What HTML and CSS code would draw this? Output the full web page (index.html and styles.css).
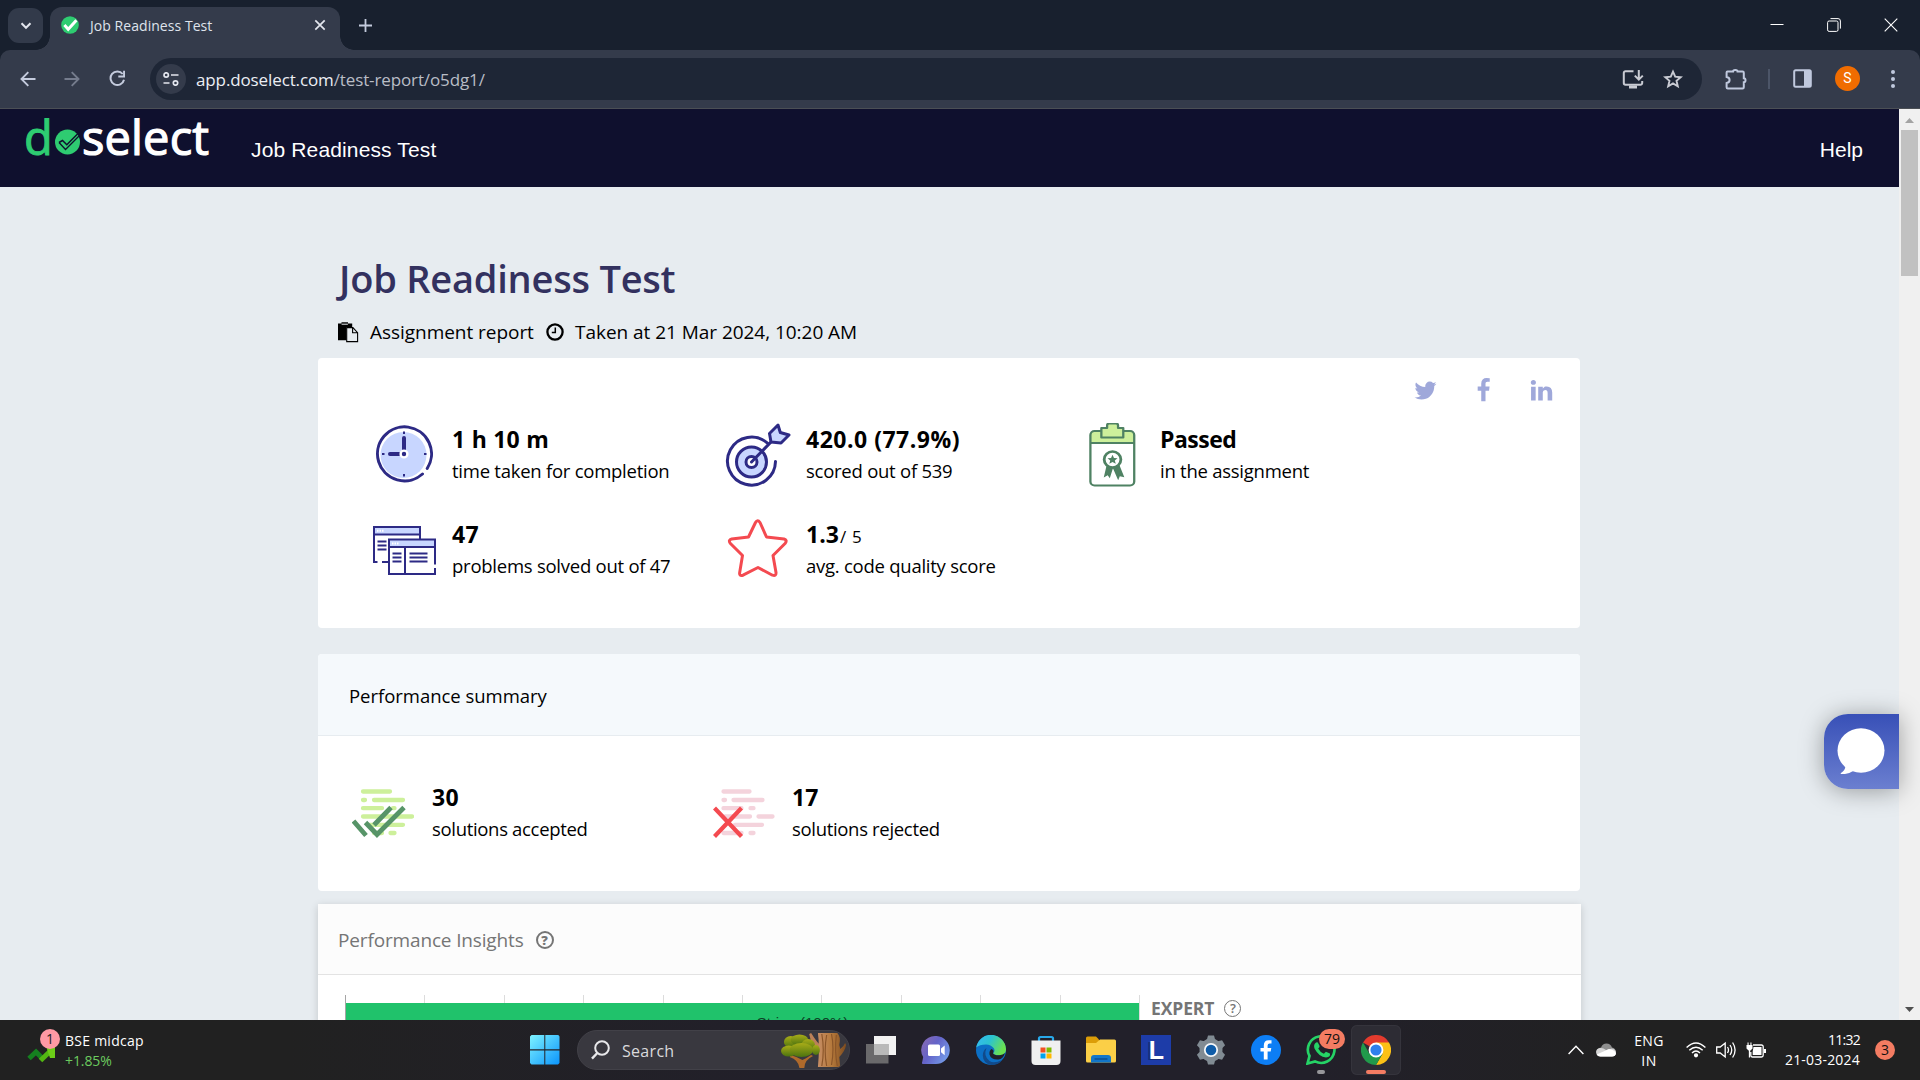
FILE: index.html
```html
<!DOCTYPE html>
<html lang="en">
<head>
<meta charset="utf-8">
<title>Job Readiness Test</title>
<link rel="stylesheet" href="styles.css">
</head>
<body>
<div class="screen">

  <div class="tabstrip">
    <div class="tab-search">
      <svg width="12" height="8" viewBox="0 0 12 8"><path d="M1.5 1.2 6 5.8l4.500-4.600" fill="none" stroke="#e3e6ee" stroke-width="2"/></svg>
    </div>
    <div class="tab">
      <svg class="favicon" width="18" height="18" viewBox="0 0 18 18"><circle cx="9" cy="9" r="8.800" fill="#2ecc71"/><path d="M3.400 9 7.200 13.200 15.400 4.200" fill="none" stroke="#fff" stroke-width="3"/></svg>
      <span class="tab-title">Job Readiness Test</span>
      <svg width="12" height="12" viewBox="0 0 12 12"><path d="M1.300 1.300l9.400 9.400M10.700 1.300l-9.400 9.400" stroke="#e3e6ee" stroke-width="1.700"/></svg>
    </div>
    <svg class="new-tab" width="13" height="13" viewBox="0 0 13 13"><path d="M6.500 0v13M0 6.500h13" stroke="#c4cbdd" stroke-width="1.800"/></svg>
    <div class="window-controls">
      <svg width="14" height="14" viewBox="0 0 14 14"><path d="M.5 6.500h13" stroke="#fff" stroke-width="1"/></svg>
      <svg width="14" height="14" viewBox="0 0 14 14" fill="none" stroke="#fff"><rect x=".6" y="3" width="10.400" height="10.400" rx="1.500"/><path d="M3.500.6H11A2.400 2.400 0 0 1 13.400 3v7.600"/></svg>
      <svg width="14" height="14" viewBox="0 0 14 14"><path d="M.7.7l12.600 12.600M13.300.7.7 13.300" stroke="#fff" stroke-width="1.100"/></svg>
    </div>
  </div>

  <div class="toolbar">
    <div class="nav-buttons">
      <svg width="16" height="16" viewBox="0 0 16 16" fill="none" stroke="#c4cbdd" stroke-width="1.900"><path d="M15.500 8H2M8.300 1.200 1.500 8l6.800 6.800"/></svg>
      <svg width="16" height="16" viewBox="0 0 16 16" fill="none" stroke="#757c8d" stroke-width="1.900"><path d="M.5 8H14M7.700 1.200 14.500 8l-6.800 6.800"/></svg>
      <svg width="17" height="17" viewBox="0 0 17 17"><path d="M15 9.800A6.800 6.800 0 1 1 13.700 4" fill="none" stroke="#c4cbdd" stroke-width="2"/><path d="M16 .8v6.700H9.300v-1.900h4.800V.8z" fill="#c4cbdd"/></svg>
    </div>
    <div class="omnibox">
      <div class="site-info">
        <svg width="16" height="14" viewBox="0 0 16 14" fill="none" stroke="#e3e6ee" stroke-width="1.700"><circle cx="3.200" cy="3" r="2.200"/><path d="M8 3h7.500M.5 11h6"/><circle cx="12.500" cy="11" r="2.200"/></svg>
      </div>
      <div class="url"><span class="url-host">app.doselect.com</span>/test-report/o5dg1/</div>
      <div class="omni-actions">
        <svg width="22" height="20" viewBox="0 0 22 20" fill="none" stroke="#c9cbd3" stroke-width="2"><path d="M11.500 2.200H3.500A1.700 1.700 0 0 0 1.800 4v10a1.700 1.700 0 0 0 1.700 1.700h15A1.700 1.700 0 0 0 20.200 14v-2"/><path d="M16.800 1v9M12.800 6.600l4 4 4-4"/><path d="M7 18h8" stroke-width="3"/></svg>
        <svg width="20" height="20" viewBox="0 0 20 20"><path d="M10 2.600l2.200 5.100 5.500.5-4.200 3.600 1.300 5.500L10 14.400l-4.800 2.900 1.300-5.500L2.300 8.200l5.500-.5z" fill="none" stroke="#c9cbd3" stroke-width="1.900"/></svg>
      </div>
    </div>
    <div class="toolbar-actions">
      <svg width="22" height="22" viewBox="0 0 22 22"><path d="M2.500 3.500h5.500q0-1.500 2.300-1.500t2.300 1.500h5a1.200 1.200 0 0 1 1.200 1.200v5.500q1.700 0 1.700 2t-1.700 2v5a1.200 1.200 0 0 1-1.200 1.200H2.800A1.200 1.200 0 0 1 1.600 19.200v-4.200q3-.5 3-3t-3-3V4.500a1 1 0 0 1 .9-1z" fill="none" stroke="#c0c9de" stroke-width="2"/></svg>
      <i class="divider"></i>
      <svg width="19" height="19" viewBox="0 0 19 19"><rect x="1.200" y="1.200" width="16.600" height="16.600" rx="1.500" fill="none" stroke="#c0c9de" stroke-width="2"/><path d="M11 1h7v17h-7z" fill="#c0c9de"/></svg>
      <div class="avatar">S</div>
      <svg width="4" height="18" viewBox="0 0 4 18" fill="#c0c9de"><circle cx="2" cy="2" r="2"/><circle cx="2" cy="9" r="2"/><circle cx="2" cy="16" r="2"/></svg>
    </div>
  </div>

  <div class="viewport">
    <div class="page">
      <header class="site-header">
        <div class="logo">
          <span class="logo-green">d</span>
          <svg width="25" height="26" viewBox="0 0 25 26"><circle cx="12.500" cy="13" r="12.500" fill="#2ecc71"/><path d="M4 13.500l3.500-2 4.300 4.300L24.500 3" fill="none" stroke="#0f102e" stroke-width="1.500"/><path d="M4 13.500l6.500 7L25 6" fill="none" stroke="#0f102e" stroke-width="1.300"/></svg>
          <span class="logo-white">select</span>
        </div>
        <div class="header-title">Job Readiness Test</div>
        <div class="header-help">Help</div>
      </header>

      <main class="content">
        <h1>Job Readiness Test</h1>
        <div class="meta">
          <svg width="21" height="21" viewBox="0 0 21 21"><path d="M0 1.500h3.500V.3H10v1.200h4.200V5H8.500v13.200H0z"/><path d="M3.600 2.200h6.300" stroke="#e7ecf0" stroke-width="1"/><path d="M8.700 5.600h6.200l4.700 5v9H8.700zM14.600 5.600v5.200h5" fill="#e7ecf0" stroke="#000" stroke-width="1.100"/></svg>
          <span class="meta-report">Assignment report</span>
          <svg width="18" height="18" viewBox="0 0 18 18" fill="none" stroke="#000"><circle cx="9" cy="9" r="7.600" stroke-width="2.300"/><path d="M9.300 4.500v5H5.800" stroke-width="1.500"/></svg>
          <span>Taken at 21 Mar 2024, 10:20 AM</span>
        </div>

        <section class="card stats-card">
          <div class="social">
            <svg width="25" height="25" viewBox="0 0 1792 1792"><path d="M1684 408q-67 98-162 167 1 14 1 42 0 130-38 259.500t-115.500 248.500-184.500 210.500-258 146-323 54.500q-271 0-496-145 35 4 78 4 225 0 401-138-105-2-188-64.500t-114-159.500q33 5 61 5 43 0 85-11-112-23-185.500-111.500t-73.500-205.500v-4q68 38 146 41-66-44-105-115t-39-154q0-88 44-163 121 149 294.500 238.500t371.500 99.500q-8-38-8-74 0-134 94.500-228.500t228.500-94.500q140 0 236 102 109-21 205-78-37 115-142 178 93-10 186-50z"/></svg>
            <svg width="25" height="25" viewBox="0 0 1792 1792"><path d="M1343 12v264h-157q-86 0-116 36t-30 108v189h293l-39 296h-254v759h-306v-759h-255v-296h255v-218q0-186 104-288.500t277-102.500q147 0 228 12z"/></svg>
            <svg width="25" height="25" viewBox="0 0 1792 1792"><path d="M477 625v991h-330v-991h330zm21-306q1 73-50.500 122t-135.500 49h-2q-82 0-132-49t-50-122q0-74 51.500-122.500t134.500-48.500 133 48.500 51 122.500zm1166 729v568h-329v-530q0-105-40.500-164.500t-126.500-59.500q-63 0-105.500 34.500t-63.500 85.500q-11 30-11 81v553h-329q2-399 2-647t-1-296l-1-48h329v144h-2q20-32 41-56t56.500-52 87-43.500 114.500-15.500q171 0 275 113.500t104 332.500z"/></svg>
          </div>
          <div class="stats">
            <div class="stat">
              <div class="stat-icon"><svg width="58" height="60" viewBox="1 -1 58 60"><circle cx="29.500" cy="29" r="23" fill="#c8d6ff"/><path d="M53.200 42.500A27 27 0 1 0 48.500 48" fill="none" stroke="#2d2a85" stroke-width="3" stroke-linecap="round"/><g stroke="#2d2a85" fill="none" stroke-width="4" stroke-linecap="round"><path d="M30 12v13M16 28h9"/></g><path d="M30 5.500v2.500M30 48v2.500M8 28h2.500M50 28h2.500" stroke="#2d2a85" stroke-width="2"/><circle cx="30" cy="28" r="3.400" fill="#2d2a85" stroke="#fff" stroke-width="2.400"/></svg></div>
              <div><h3 class="wide">1 h 10 m</h3><p>time taken for completion</p></div>
            </div>
            <div class="stat">
              <div class="stat-icon"><svg width="66" height="66" viewBox="0 0 66 66"><g fill="none" stroke="#2d2a85" stroke-width="3" stroke-linecap="round"><path d="M42.500 20.200A24 24 0 1 0 50.500 38.500"/><circle cx="26.500" cy="39" r="15" fill="#c8d6ff"/><circle cx="26.500" cy="39" r="5.500" fill="#fff"/><path d="M26.500 39 46 19"/><path d="M46 19l-1.500-8.500L53 2l2.300 7.500L64 12l-8 8z" fill="#c8d6ff" stroke-linejoin="round"/></g></svg></div>
              <div><h3 class="wider">420.0 (77.9%)</h3><p>scored out of 539</p></div>
            </div>
            <div class="stat">
              <div class="stat-icon"><svg width="48" height="66" viewBox="-.8 2 46 66" preserveAspectRatio="none"><rect x="1.500" y="10" width="42" height="54.500" rx="4" fill="#fff"/><path d="M1.500 22V14a4 4 0 0 1 4-4h34a4 4 0 0 1 4 4v8z" fill="#cdf09b"/><g fill="none" stroke="#4f8263" stroke-width="2.200"><rect x="1.500" y="10" width="42" height="54.500" rx="4"/><path d="M1.500 22h42"/><path d="M12 16.500V7h5.500V4.500A2 2 0 0 1 19.500 2.500h6.500A2 2 0 0 1 28 4.500V7h5v9.500z" fill="#cdf09b" stroke-linejoin="round"/></g><path d="M17 44.500l-2.700 12 3.800-2.300 2 3 3-10 5 12 1.600-4 4.300 1-5-13z" fill="#4f8263"/><circle cx="22.700" cy="38.500" r="8" fill="#fff" stroke="#4f8263" stroke-width="2.700"/><path d="M22.700 33.800l1.400 3.200 3.400.2-2.600 2.200.9 3.400-3.100-1.900-3.100 1.900.9-3.400-2.600-2.200 3.400-.2z" fill="#4f8263"/></svg></div>
              <div><h3 class="tight">Passed</h3><p>in the assignment</p></div>
            </div>
            <div class="stat">
              <div class="stat-icon"><svg width="64" height="52" viewBox="0 0 64 52"><g fill="none" stroke="#2d2a85" stroke-width="2"><path d="M2 3h45v7H2z" fill="#c8d6ff" stroke="none"/><path d="M5.500 38H2V3h46v12M2 10.500h46M10 38h6"/><path d="M5.500 17.500h9M5.500 21.500h9M5.500 25.500h9"/><path d="M17 16h45v34H17z" fill="#fff" stroke="none"/><path d="M17 16h45v6H17z" fill="#c8d6ff" stroke="none"/><path d="M63 40.500V15.500H17V50h46v-6M17 23h46M33 23v27M20.500 29.500h9M20.500 33.500h9M20.500 37.500h9M37.500 29.500h18M37.500 33.500h18M37.500 37.500h18"/></g><path d="M5 6.800h7M20 19.500h7" stroke="#fff" stroke-width="2" stroke-dasharray="1.500 1"/></svg></div>
              <div><h3 class="wide">47</h3><p>problems solved out of 47</p></div>
            </div>
            <div class="stat">
              <div class="stat-icon"><svg class="star" width="62" height="60" viewBox="0 0 62 60"><path d="M28.500 4.500q2-3.500 4.500 0l6.500 14.500 17.500 2q3.500 1 1.300 4.200L46 37.500l3 17q.3 4-3.500 2.700L31 49.500 16 57.200q-4 1.300-3.300-2.700l2.800-17L3.200 25.200q-2.200-3.200 1.500-4.200L21.500 19z" fill="none" stroke="#f44a50" stroke-width="3" stroke-linejoin="round"/></svg></div>
              <div><h3>1.3<small>/ 5</small></h3><p>avg. code quality score</p></div>
            </div>
          </div>
        </section>

        <section class="card summary-card">
          <div class="summary-head">Performance summary</div>
          <div class="summary-body">
            <div class="result">
              <svg width="62" height="50" viewBox="0 0 62 50"><g stroke="#cdf09b" stroke-width="4.300" stroke-linecap="round"><path d="M11 2.500h27M11 11h2M22 11h29M11 19.200h19M41 19.200h1.500M11 27.500h49M16 35.800h35M22 44h8M38.500 44h4"/></g><g fill="none" stroke="#579468" stroke-width="4.800"><path d="M1.500 32 14 46.500M39 18.500 22 36M13.500 33.500l11.500 12L52 18.500"/></g></svg>
              <div><h3 class="wide">30</h3><p>solutions accepted</p></div>
            </div>
            <div class="result">
              <svg width="62" height="50" viewBox="0 0 62 50"><g stroke="#f4d3dc" stroke-width="4.300" stroke-linecap="round"><path d="M10.500 2.500h26M10.500 11h1.500M20.500 11h29M10.500 19.200h18M37.500 19.200h3M12 27.500h25M45.500 27.500h14M22 35.800h27M10.500 44h18M37.500 44h3"/></g><path d="M1.500 19 28.500 47.500M28.500 19 1.500 47.500" stroke="#f44a50" stroke-width="4.200"/></svg>
              <div><h3>17</h3><p>solutions rejected</p></div>
            </div>
          </div>
        </section>

        <section class="insights-card">
          <div class="insights-head">Performance Insights <span class="help help-bold">?</span></div>
          <div class="insights-body">
            <div class="chart">
              <div class="ticks"><i></i><i></i><i></i><i></i><i></i><i></i><i></i><i></i><i></i><i></i></div>
              <div class="bar">String (100%)</div>
            </div>
            <div class="level">EXPERT <span class="help">?</span></div>
          </div>
        </section>
      </main>

      <div class="chat">
        <svg width="48" height="46" viewBox="0 0 48 46"><ellipse cx="24" cy="22.500" rx="23.500" ry="22.300" fill="#fff"/><path d="M8 37q1.500 4-4 8-1 1.500 1 1.300Q12 46 18 42z" fill="#fff"/></svg>
      </div>
    </div>
    <div class="scrollbar">
      <svg width="9" height="5" viewBox="0 0 9 5"><path d="M0 5 4.500 0 9 5z" fill="#a3a3a3"/></svg>
      <div class="thumb"></div>
      <svg class="down" width="9" height="5" viewBox="0 0 9 5"><path d="M0 0l4.500 5L9 0z" fill="#505050"/></svg>
    </div>
  </div>

  <div class="taskbar">
    <div class="widget">
      <div class="widget-icon">
        <svg width="30" height="20" viewBox="0 0 30 20"><path d="M2 15.500 9 9l6.500 6.500" fill="none" stroke="#15801f" stroke-width="5"/><path d="M13.500 17.500l12-11.500" stroke="#52b612" stroke-width="5"/><path d="M19 3h9v12h-5z" fill="#6ccd18"/></svg>
        <span class="widget-badge">1</span>
      </div>
      <div class="widget-text"><div>BSE midcap</div><div class="gain">+1.85%</div></div>
    </div>
    <div class="apps">
      <div class="app"><svg width="30" height="30" viewBox="0 0 30 30"><defs><linearGradient id="win" x1="0" y1="0" x2="1" y2="1" gradientUnits="objectBoundingBox"><stop offset="0" stop-color="#7ef3ff"/><stop offset="1" stop-color="#0b94fb"/></linearGradient></defs><path d="M1.500 0h12.800v14.300H0V1.500zM15.300 0h13l1.200 1.500v12.800H15.300zM0 15.500h14.300v14H1.500L0 28zM15.300 15.500h14.200V28l-1.500 1.500H15.300z" fill="url(#win)"/></svg></div>
      <div class="search">
        <svg width="19" height="20" viewBox="0 0 19 20" fill="none" stroke="#e8e8ea" stroke-width="2"><circle cx="11" cy="8" r="6.800"/><path d="M6.300 13 1 18.600" stroke-width="2.400"/></svg>
        <span>Search</span>
        <svg class="trees" width="68" height="40" viewBox="0 0 70 40" preserveAspectRatio="none"><defs><linearGradient id="trunk"><stop offset="0" stop-color="#c68d64"/><stop offset=".5" stop-color="#b5793b"/><stop offset="1" stop-color="#7b4a1e"/></linearGradient><linearGradient id="leaf" x1="0" y1="0" x2="0" y2="1"><stop offset="0" stop-color="#a8ac18"/><stop offset="1" stop-color="#4c730f"/></linearGradient></defs>
          <path d="M9 27q9 3 10 11h5q0-8 9-12l-2-1q-6 4-9 5-5-3-12-5z" fill="#b06a2b"/>
          <path d="M31 3q7 11 10 12l3 9-3-1Q31 16 29 4z" fill="#bb8158"/>
          <path d="M38 3h20q4 4 2 12l1 4q4-3 5-6l1 2q-1 6-7 12l1 10H38q2-20 0-34z" fill="url(#trunk)"/>
          <path d="M42 4q3 16 0 32M47 5q-3 16 0 31M52 4q3 14 0 31M57 5q-2 16 1 31" fill="none" stroke="#8a5529" stroke-width="1.200"/>
          <g fill="url(#leaf)"><ellipse cx="10" cy="12" rx="7" ry="6"/><ellipse cx="19" cy="10" rx="9" ry="5.500"/><ellipse cx="28" cy="15" rx="7" ry="6"/><ellipse cx="8" cy="21" rx="8" ry="5.500"/><ellipse cx="21" cy="20" rx="12" ry="7"/><ellipse cx="36" cy="20" rx="4" ry="5"/></g>
        </svg>
      </div>
      <div class="app"><svg width="30" height="28" viewBox="0 0 30 28"><path d="M8 0h22v19H8z" fill="#f2f2f2"/><path d="M0 8h22.500v19.500H0z" fill="#777" fill-opacity=".85"/><path d="M8 8h14.500v11H8z" fill="#b9b9b9"/></svg></div>
      <div class="app"><svg width="30" height="30" viewBox="0 0 30 30"><defs><linearGradient id="chat" x1="0" y1="0" x2="1" y2=".6"><stop offset="0" stop-color="#8d6ab0"/><stop offset=".5" stop-color="#6463c8"/><stop offset="1" stop-color="#7398e6"/></linearGradient></defs><path d="M15.500 1A14 14 0 1 1 14 29H2q-1.600-.4-.8-2l1-5A14 14 0 0 1 15.500 1z" fill="url(#chat)"/><rect x="7" y="9.500" width="12" height="11.500" rx="1.500" fill="#fff"/><path d="M20 13.500l3.700-3v9.700l-3.700-3z" fill="#fff"/></svg></div>
      <div class="app"><svg width="30" height="30" viewBox="0 0 30 30"><defs><linearGradient id="edge" x1="0" y1="0" x2="1" y2=".4"><stop offset="0" stop-color="#36b9f5"/><stop offset=".5" stop-color="#2cc3d0"/><stop offset="1" stop-color="#6ae052"/></linearGradient></defs><circle cx="15" cy="15" r="15" fill="#0c6fc5"/><path d="M.2 12.500A15 15 0 0 1 30 14q.2 6-6.500 6.300-5 .2-6.500-2 2.500-2.300.8-5Q15 9.500 10 9.500q-6.500 0-9.800 3z" fill="url(#edge)"/><path d="M10.500 13q-3.500 8 3 13 4.500 3 12.500-1-2.500 5-11 5Q7 28 6.800 20.500 7 15 10.500 13z" fill="#114a8b"/><path d="M17 18.300q1.500 2.300 6.500 2 3.500-.2 5.500-2.300-2 6-6.500 6.500-7.500.5-9-5-.5-4 2-5.500 3 1 1.500 4.300z" fill="#211f28"/></svg></div>
      <div class="app"><svg width="30" height="30" viewBox="0 0 30 30"><path d="M8 7V3.500Q8 2 9.500 2h11Q22 2 22 3.500V7" fill="none" stroke="#28a8ea" stroke-width="2.200"/><path d="M.5 5.500h29V26q0 4-4 4h-21q-4 0-4-4z" fill="#f0f0f0"/><path d="M9.500 12.500h5v5h-5z" fill="#f25022"/><path d="M15.500 12.500h5v5h-5z" fill="#7fba00"/><path d="M9.500 18.500h5v5h-5z" fill="#00a4ef"/><path d="M15.500 18.500h5v5h-5z" fill="#ffb900"/></svg></div>
      <div class="app"><svg width="30" height="28" viewBox="0 0 30 28"><path d="M0 2Q0 .5 1.500.5H10L13 3.500V8H0z" fill="#dc9d08"/><path d="M0 7h10l4-3.500h14.500Q30 3.500 30 5v20q0 1.500-1.500 1.500h-27Q0 26.500 0 25z" fill="#fbcf47"/><path d="M5 26.500V22q0-3 3-3h14q3 0 3 3v4.500z" fill="#1276c9"/><path d="M9 23h12" stroke="#0a4f93" stroke-width="1.300" stroke-linecap="round"/></svg></div>
      <div class="app"><div class="l-app">L</div></div>
      <div class="app"><svg width="32" height="30" viewBox="0 0 32 30"><g fill="#818b93"><circle cx="16" cy="15" r="11.500"/><g id="tooth"><path d="M11.500 6 13 .5h6L20.500 6z"/></g><use href="#tooth" transform="rotate(60 16 15)"/><use href="#tooth" transform="rotate(120 16 15)"/><use href="#tooth" transform="rotate(180 16 15)"/><use href="#tooth" transform="rotate(240 16 15)"/><use href="#tooth" transform="rotate(300 16 15)"/></g><circle cx="16" cy="15" r="6.200" fill="#0f5ca8" stroke="#f4f6f8" stroke-width="1.800"/></svg></div>
      <div class="app"><svg width="30" height="30" viewBox="0 0 30 30"><circle cx="15" cy="15" r="15" fill="#0d7ef5"/><path d="M12.800 24.500V16.500H9.500v-3.600h3.300v-2.400q0-5.300 5-5.300h2.700v3.400h-1.900q-2 0-2 2v2.300h3.700l-.6 3.600h-3.100v8z" fill="#fff"/></svg></div>
      <div class="app running"><svg width="30" height="30" viewBox="0 0 30 30"><path d="M1.500 28.500l2-7.500A13.300 13.300 0 1 1 9 26.400z" fill="none" stroke="#25d366" stroke-width="2.700"/><path d="M9.500 8q1-1.200 2.300-.6l1.800 3.600q.2 1-1.400 2.500 2 4 5.700 5.200l2-2 4 1.900q1 3.600-3.900 3.900Q13 22 8.500 13.500q-1.200-3.500 1-5.500z" fill="#25d366"/></svg><span class="app-badge">79</span></div>
      <div class="app active"><svg width="30" height="30" viewBox="0 0 30 30"><path d="M15 15 2 7.500A15 15 0 0 1 28 7.500z" fill="#e33b2e"/><path d="M15 15V7.500h13A15 15 0 0 1 15 30l6.500-11.250z" fill="#fbc116"/><path d="M15 15l6.500 3.750L15 30A15 15 0 0 1 2 7.500l6.500 11.250z" fill="#219a4b"/><circle cx="15" cy="15" r="6.500" fill="#2f80ed" stroke="#fff" stroke-width="1.800"/></svg></div>
    </div>
    <div class="tray">
      <svg width="16" height="10" viewBox="0 0 16 10"><path d="M.6 9 8 1.200 15.400 9" fill="none" stroke="#fff" stroke-width="1.400"/></svg>
      <svg class="cloud" width="20" height="14" viewBox="0 0 20 14"><path d="M1 9Q1 5 5 4.500 6.500.5 10.500.5T16 4.500Q19.500 5 20 9z" fill="#8e8e8e"/><path d="M0 9q.3-3.500 4-4 3-.5 6 2l6-1.500q4 .5 4 4.500-.5 3.500-4 3.500H4.500Q.5 13.500 0 9z" fill="#d6d6d6"/><path d="M.7 11.500 13 6q6.500 1 7 4.500-.5 3-4 3H4.500q-2.500 0-3.800-2z" fill="#fff"/></svg>
      <div class="lang"><div>ENG</div><div>IN</div></div>
      <svg width="20" height="16" viewBox="0 0 20 16" fill="none" stroke="#fff" stroke-width="1.400"><path d="M.6 5.500Q10-3.500 19.400 5.500M3.300 8.300Q10 2 16.700 8.300M6 11Q10 7 14 11"/><circle cx="10" cy="13.300" r="1.400" fill="#fff"/></svg>
      <svg width="20" height="18" viewBox="0 0 20 18" fill="none" stroke="#fff" stroke-width="1.300"><path d="M.7 6h3.500l5-4v14l-5-4H.7zM11.500 6q2 3 0 6M14 4q3.500 5 0 10M16.600 1.500q5 7.500 0 15"/></svg>
      <svg width="20" height="17" viewBox="0 0 20 17"><path d="M7 3h8.500A1.700 1.700 0 0 1 17.200 4.700v8.600a1.700 1.700 0 0 1-1.700 1.700h-9A1.700 1.700 0 0 1 4.800 13.300V10" fill="none" stroke="#fff" stroke-width="1.300"/><path d="M7.500 5H15.500v8H6.700V9.500zM18 7h2v4h-2zM1.500.5V3H.5v3.500L2.500 8.500h2L6.500 6.500V3H5.500V.5H4.400V3H2.600V.5z" fill="#fff"/><path d="M3.500 8v7.500" stroke="#fff" stroke-width="1.300"/></svg>
      <div class="clock"><div class="time">11:32</div><div>21-03-2024</div></div>
      <span class="notif">3</span>
    </div>
  </div>
</div>
</body>
</html>
```
FILE: styles.css
```css
* { box-sizing: border-box; }
body { margin: 0; font-family: "Open Sans", "Noto Sans", sans-serif; color: #000; }
h1, h3, p { margin: 0; }
svg { display: block; flex: none; }
.screen { width: 1920px; height: 1080px; overflow: hidden; display: flex; flex-direction: column; background: #18202e; white-space: nowrap; }

/* Browser tab strip */
.tabstrip { height: 50px; flex: none; display: flex; align-items: flex-start; padding: 7px 17px 0 8px; }
.tab-search { width: 35px; height: 35px; margin-top: 1px; border-radius: 11px; background: #323a4a; display: grid; place-items: center; }
.tab { position: relative; width: 290px; height: 43px; margin-left: 7px; padding: 0 14px 7px 11px; border-radius: 12px 12px 0 0; background: #343b4b; display: flex; align-items: center; }
.tab::before, .tab::after { content: ""; position: absolute; bottom: 0; width: 14px; height: 14px; }
.tab::before { left: -14px; background: radial-gradient(circle at 0 0, transparent 13.500px, #343b4b 14px); }
.tab::after { right: -14px; background: radial-gradient(circle at 100% 0, transparent 13.500px, #343b4b 14px); }
.tab-title { flex: 1; margin-left: 11px; font-size: 14px; letter-spacing: .05px; color: #dfe3ec; }
.new-tab { margin: 12px 0 0 19px; }
.window-controls { margin: 11px 5px 0 auto; display: flex; gap: 43px; }

/* Browser toolbar */
.toolbar { height: 59px; flex: none; display: flex; align-items: center; padding: 0 25px 1px 20px; border-radius: 10px 10px 0 0; background: #343b4b; border-bottom: 1px solid #4b4f55; }
.nav-buttons { width: 130px; display: flex; align-items: center; gap: 28px; }
.nav-buttons svg:last-child { margin-left: 1px; }
.omnibox { width: 1552px; height: 42px; border-radius: 21px; background: #1e2636; display: flex; align-items: center; padding: 0 19px 0 6px; }
.site-info { width: 30px; height: 30px; border-radius: 50%; background: #343b4b; display: grid; place-items: center; }
.url { margin-left: 10px; padding-top: 2px; font-size: 17px; letter-spacing: -.12px; color: #b9bdc6; }
.url-host { color: #eceef4; }
.omni-actions { margin-left: auto; display: flex; gap: 19px; }
.toolbar-actions { flex: 1; margin-left: 23px; display: flex; align-items: center; }
.divider { width: 2px; height: 20px; margin: 0 23px 0 21px; background: #4c5568; }
.avatar { width: 25px; height: 25px; margin: 0 31px 0 23px; border-radius: 50%; background: #f06c00; color: #fff; font: 14px/25px Roboto, sans-serif; text-align: center; }

/* Page */
.viewport { height: 911px; flex: none; display: flex; overflow: hidden; }
.page { position: relative; width: 1899px; background: #e7ecf0; }
.scrollbar { width: 21px; background: #f0f0f0; display: flex; flex-direction: column; align-items: center; padding: 9px 0 8px; }
.thumb { width: 17px; height: 146px; margin-top: 7px; background: #c1c1c1; }
.down { margin-top: auto; }

.site-header { height: 78px; display: flex; background: #0f102e; color: #fff; font: 21px/82px "Liberation Sans", Arial, sans-serif; }
.logo { width: 225px; padding-left: 24px; display: flex; font: 47px/56px "Open Sans", sans-serif; }
.logo svg { margin: 20px 2px 0 2px; }
.logo-green { width: 29px; color: #2ecc71; -webkit-text-stroke: 1px #2ecc71; }
.logo-white { letter-spacing: .15px; -webkit-text-stroke: 1.200px #fff; }
.header-title { width: 220px; margin-left: 26px; letter-spacing: .14px; }
.header-help { margin: 0 36px 0 auto; }

.content { width: 1263px; margin-left: 318px; padding-top: 60px; }
h1 { padding-left: 21px; font-size: 38px; line-height: 62px; font-weight: 600; letter-spacing: -.22px; color: #33315f; }
.meta { height: 49px; padding: 0 0 3px 20px; display: flex; align-items: center; font-size: 19px; letter-spacing: -.04px; }
.meta span { margin: 0 12px 0 11px; }
.meta-report { width: 164px; }

.card { width: 1262px; border-radius: 4px; background: #fff; overflow: hidden; }
.stats-card { height: 270px; padding: 20px 26px 0 46px; }
.social { height: 45px; display: flex; justify-content: flex-end; gap: 33px; fill: #9fa8da; }
.stats { display: grid; grid-template-columns: repeat(3, 354px); grid-auto-rows: 95px; }
.stat { display: flex; }
.stat-icon { width: 80px; height: 64px; margin-right: 8px; display: grid; place-items: center; }
.star { margin-bottom: 10px; }
h3 { height: 32px; font-size: 23px; line-height: 32px; font-weight: 700; }
.wide { letter-spacing: .25px; }
.wider { letter-spacing: .5px; }
.tight { letter-spacing: -.5px; }
small { font-size: 17px; line-height: 1; font-weight: 400; margin-left: 1px; letter-spacing: .8px; }
p { font-size: 18.500px; line-height: 32px; letter-spacing: -.25px; }

.summary-card { height: 237px; margin-top: 26px; }
.summary-head { height: 82px; padding-left: 31px; background: #f5f9fc; border-bottom: 1px solid #e7ecf0; font-size: 18.500px; line-height: 83px; letter-spacing: -.03px; }
.summary-body { display: flex; padding: 45px 0 0 34px; }
.result { width: 360px; display: flex; }
.result > svg { margin: 8px 18px 0 0; }
.result:last-child > svg { margin: 8px 17px 0 1px; }
.result p { letter-spacing: -.32px; }

.insights-card { height: 300px; margin-top: 13px; background: #fff; box-shadow: 0 2px 8px rgba(0, 0, 0, .16); }
.insights-head { height: 71px; padding: 2px 0 0 20px; display: flex; align-items: center; background: #fcfcfc; border-bottom: 1px solid #e3e3e3; font-size: 19px; letter-spacing: -.15px; color: #757575; }
.help { width: 17px; height: 17px; margin-left: 10px; border: 1.500px solid #757575; border-radius: 50%; font-size: 13px; line-height: 14px; font-weight: 600; text-align: center; letter-spacing: 0; }
.help-bold { width: 18px; height: 18px; border-width: 2px; font-weight: 800; margin-left: 12px; }
.insights-body { display: flex; padding: 20px 0 0 27px; }
.chart { width: 795px; height: 100px; border-left: 1px solid #a5a5a5; }
.ticks { display: grid; grid-template-columns: repeat(10, 1fr); height: 8px; }
.ticks i { border-right: 1px solid #dcdcdc; }
.bar { height: 60px; padding-left: 120px; border-right: 1px solid #dcdcdc; background: #20c26b; color: #0d3f25; font: 15px/40px "Liberation Sans", Arial, sans-serif; text-align: center; }
.level { display: flex; align-items: center; height: 26px; margin-left: 11px; font-size: 17.500px; font-weight: 700; letter-spacing: -.1px; color: #757575; }

.chat { position: absolute; right: 0; top: 605px; width: 75px; height: 75px; border-radius: 24px 0 0 24px; padding: 14px 0 0 13px; background: linear-gradient(#3850b7, #6b7fd0); box-shadow: 0 2px 24px rgba(0, 0, 0, .35); }

/* Taskbar */
.taskbar { height: 60px; flex: none; display: flex; align-items: center; background: linear-gradient(90deg, #212121 15%, #22202a 40%, #22202a 68%, #212121 85%); color: #fff; font-size: 14px; line-height: 20px; }
.widget { width: 517px; padding: 1px 0 0 27px; display: flex; }
.widget-icon { position: relative; width: 38px; padding-top: 12px; }
.widget-badge { position: absolute; left: 13px; top: -2px; width: 20px; height: 20px; border-radius: 50%; background: #ff99a4; color: #222; text-align: center; }
.widget-text { letter-spacing: .25px; }
.gain { color: #6ccb5f; letter-spacing: -.1px; }
.apps { display: flex; align-items: center; }
.app { position: relative; width: 55px; height: 50px; display: grid; place-items: center; }
.search { width: 273px; height: 40px; margin: 0 3px 0 5px; padding-left: 13px; border-radius: 20px; background: #39383f; border: 1px solid #424148; display: flex; align-items: center; overflow: hidden; font-size: 16px; color: #dadadc; }
.search span { margin: 1px 0 0 12px; letter-spacing: .3px; }
.trees { margin: 0 0 0 auto; }
.l-app { width: 30px; height: 30px; background: #1d3ca8; font: bold 25px/30px "Liberation Sans", sans-serif; text-align: center; text-shadow: -2px 1px 0 #142b78; padding-left: 2px; }
.app-badge { position: absolute; left: 26px; top: 4px; width: 26px; height: 20px; border-radius: 10px; background: #f47c62; color: #111; text-align: center; }
.running::after, .active::after { content: ""; position: absolute; bottom: 1px; height: 4px; border-radius: 2px; }
.running::after { left: 24px; width: 8px; background: #97979b; }
.active { width: 50px; margin-left: 3px; background: #2d2c34; border-radius: 6px; box-shadow: inset 0 0 0 1px #35343c; }
.active::after { left: 15px; width: 20px; background: #f47c62; }
.tray { margin-left: auto; padding-right: 25px; display: flex; align-items: center; }
.cloud { margin-left: 12px; }
.lang { width: 30px; margin: 1px 22px 0 18px; text-align: center; letter-spacing: .4px; }
.tray svg + svg:not(.cloud) { margin-left: 10px; }
.clock { width: 76px; margin: -1px 15px 0 18px; text-align: right; letter-spacing: .2px; }
.time { letter-spacing: -.75px; }
.notif { width: 20px; height: 20px; border-radius: 50%; background: #f47c62; color: #111; text-align: center; }
```
